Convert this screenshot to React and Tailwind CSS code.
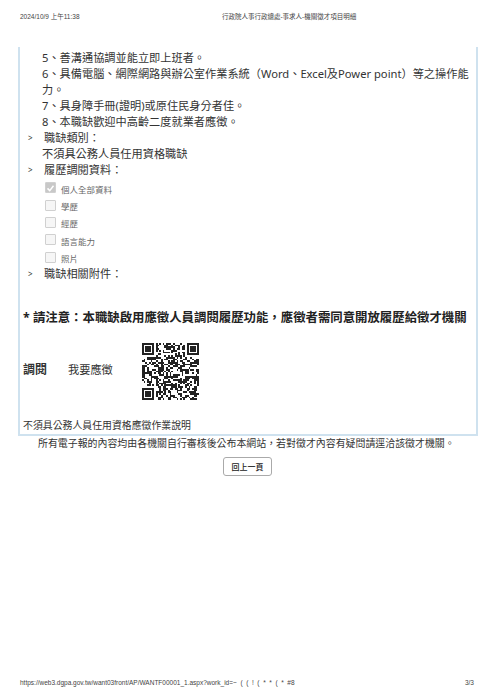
import React from "react";

const cjk = "font-['Noto_Sans','Noto_Sans_CJK_TC',sans-serif]";

const requirements = [
  "5、善溝通協調並能立即上班者。",
  "6、具備電腦、網際網路與辦公室作業系統（Word、Excel及Power point）等之操作能力。",
  "7、具身障手冊(證明)或原住民身分者佳。",
  "8、本職缺歡迎中高齡二度就業者應徵。",
];

const resumeItems = [
  { label: "個人全部資料", checked: true },
  { label: "學歷" },
  { label: "經歷" },
  { label: "語言能力" },
  { label: "照片" },
];

// QR modules: three finder squares plus a fixed pseudo random fill
const QR_SIZE = 33;
const inFinder = (x, y) =>
  (x < 8 && y < 8) || (x >= QR_SIZE - 8 && y < 8) || (x < 8 && y >= QR_SIZE - 8);

const qrPath = () => {
  let seed = 20241009;
  let d = "";
  for (let y = 0; y < QR_SIZE; y++) {
    for (let x = 0; x < QR_SIZE; x++) {
      seed = (seed * 1103515245 + 12345) & 0x7fffffff;
      if (!inFinder(x, y) && (seed >> 16) % 100 < 50) d += `M${x} ${y}h1v1h-1z`;
    }
  }
  return d;
};

const Finder = ({ x, y }) => (
  <path
    fillRule="evenodd"
    d={`M${x} ${y}h7v7h-7zM${x + 1} ${y + 1}v5h5v-5zM${x + 2} ${y + 2}h3v3h-3z`}
  />
);

const QrCode = () => (
  <svg viewBox="0 0 33 33" className="h-[57px] w-[57px] fill-[#222]" shapeRendering="crispEdges">
    <path d={qrPath()} />
    <Finder x={0} y={0} />
    <Finder x={26} y={0} />
    <Finder x={0} y={26} />
  </svg>
);

const Heading = ({ children }) => (
  <div className="flex">
    <span className="w-[20px] pl-[4px] text-[8px]">&gt;</span>
    <span>{children}</span>
  </div>
);

const ResumeItem = ({ label, checked }) => (
  <div className="flex h-[17.4px] items-center">
    <span
      className={`flex h-[11px] w-[11px] items-center justify-center rounded-[1px] border border-[#d0d0d0] ${
        checked ? "bg-[#c8c8c8]" : "bg-[#f6f6f6]"
      }`}
    >
      {checked && (
        <svg viewBox="0 0 12 12" className="h-[10px] w-[10px] fill-none stroke-white stroke-[2]">
          <path d="M2 6.5 5 9.5 10 3" />
        </svg>
      )}
    </span>
    <span className="ml-[5px] mt-[4px] text-[8.5px] leading-[10px] text-[#666]">{label}</span>
  </div>
);

export default function App() {
  return (
    <div lang="zh-TW" className={`flex h-[700px] w-[495px] flex-col overflow-hidden bg-white text-[#333] ${cjk}`}>
      {/* Print header */}
      <div className="flex pl-[20px] pt-[13px] text-[6.5px] leading-[8px] text-[#444]">
        <span className="w-[202px] font-['Liberation_Sans','Noto_Sans_CJK_TC',sans-serif]">2024/10/9 上午11:38</span>
        <span>行政院人事行政總處-事求人-機關徵才項目明細</span>
      </div>

      {/* Job detail panel */}
      <div className="ml-[18px] mt-[26px] h-[389px] w-[460px] border-x-2 border-b-2 border-[#cfe2ef] pt-[3px]">
        <div className="pl-[22px] pr-[5px] text-[11.2px] leading-[16px]">
          {requirements.map((line) => (
            <div key={line}>{line}</div>
          ))}
        </div>

        <div className="pl-[4px] text-[11.2px] leading-[16px]">
          <Heading>職缺類別：</Heading>
          <div className="pl-[18px]">不須具公務人員任用資格職缺</div>
          <Heading>履歷調閱資料：</Heading>
          <div className="pl-[21px] pt-[1px]">
            {resumeItems.map((item) => (
              <ResumeItem key={item.label} {...item} />
            ))}
          </div>
          <Heading>職缺相關附件：</Heading>
        </div>

        <div className="mt-[27px] pl-[3px] text-[12.4px] font-bold leading-[18px] text-[#222] whitespace-nowrap">
          * 請注意：本職缺啟用應徵人員調閱履歷功能，應徵者需同意開放履歷給徵才機關
        </div>

        <div className="mt-[16px] flex items-center pl-[3px]">
          <span className="mb-[2px] w-[45px] text-[12px] font-bold">調閱</span>
          <span className="mb-[2px] w-[74px] text-[11.2px]">我要應徵</span>
          <QrCode />
        </div>

        <div className="mt-[18px] pl-[3px] text-[9.9px] leading-[14px]">不須具公務人員任用資格應徵作業說明</div>
      </div>

      {/* Notice and back button */}
      <div className="pl-[38px] text-[9.93px] leading-[14px] whitespace-nowrap">
        所有電子報的內容均由各機關自行審核後公布本網站，若對徵才內容有疑問請逕洽該徵才機關。
      </div>
      <div className="ml-[223px] mt-[7px] flex">
        <button className="h-[19px] w-[49px] rounded-[3px] border border-[#aaa] bg-white text-[8px] font-medium leading-none text-[#222]">
          回上一頁
        </button>
      </div>

      {/* Print footer */}
      <div className="mt-auto flex justify-between pb-[13px] pl-[20px] pr-[21px] font-['Liberation_Sans',sans-serif] text-[6.5px] leading-[8px] text-[#444]">
        <span className="whitespace-pre">https://web3.dgpa.gov.tw/want03front/AP/WANTF00001_1.aspx?work_id=~  (  (  !  (  *  *  (  *  #8</span>
        <span>3/3</span>
      </div>
    </div>
  );
}
